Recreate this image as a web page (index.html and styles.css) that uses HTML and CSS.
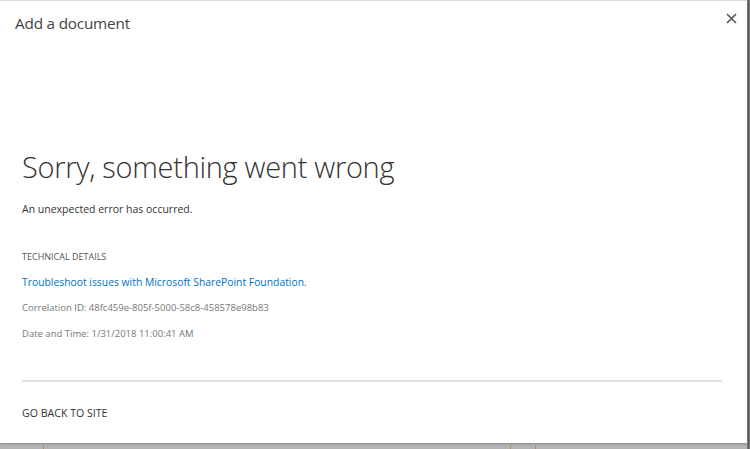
FILE: index.html
```html
<!DOCTYPE html>
<html>
<head>
<meta charset="utf-8">
<link rel="stylesheet" href="styles.css">
</head>
<body>
<div class="backdrop">
  <div class="dialog">
    <div class="titlebar">
      <h1 class="title">Add a document</h1>
      <span class="close">
        <svg width="11" height="11" viewBox="0 0 11 11"><path d="M1 1L10 10M10 1L1 10" stroke="#555" stroke-width="1.6"/></svg>
      </span>
    </div>
    <div class="content">
      <h2 class="headline">Sorry, something went wrong</h2>
      <p class="message">An unexpected error has occurred.</p>
      <p class="label">TECHNICAL DETAILS</p>
      <a class="link" href="#">Troubleshoot issues with Microsoft SharePoint Foundation.</a>
      <p class="detail">Correlation ID: 48fc459e-805f-5000-58c8-458578e98b83</p>
      <p class="detail">Date and Time: 1/31/2018 11:00:41 AM</p>
      <hr class="rule">
      <p class="back">GO BACK TO SITE</p>
    </div>
  </div>
  <div class="under">
    <span class="tick t1"></span>
    <span class="tick t2"></span>
    <span class="tick t3"></span>
  </div>
</div>
</body>
</html>
```
FILE: styles.css
```css
html, body {
  margin: 0;
  padding: 0;
  height: 100%;
  overflow: hidden;
  background: #b3b3b3;
}
.backdrop {
  position: relative;
  width: 750px;
  height: 449px;
  background: linear-gradient(to right, #b3b3b3 0, #b3b3b3 747px, #444 748px, #777 749px);
}
.dialog {
  position: relative;
  width: 747px;
  height: 443px;
  background: #fff;
  border-top: 1px solid #dcdcdc;
  box-sizing: border-box;
  box-shadow: 0 1px 2px rgba(0,0,0,0.25);
  font-family: "Open Sans", "Noto Sans", sans-serif;
}
.titlebar {
  display: flex;
  justify-content: space-between;
  align-items: flex-start;
  height: 48px;
}
.title {
  margin: 12px 0 0 15px;
  font-size: 15.3px;
  font-weight: 400;
  color: #444;
  letter-spacing: -0.2px;
}
.close {
  margin: 12px 10px 0 0;
  display: block;
  line-height: 0;
}
.content {
  padding: 98px 25px 0 22px;
}
.headline {
  margin: 0;
  font-size: 29px;
  font-weight: 300;
  color: #333;
  letter-spacing: -0.3px;
  line-height: 40px;
}
.message {
  margin: 15px 0 0;
  font-size: 10.5px;
  line-height: 14px;
  color: #333;
}
.label {
  margin: 35px 0 0;
  font-size: 9px;
  line-height: 12px;
  color: #555;
}
.link {
  display: block;
  margin-top: 12px;
  font-size: 10.35px;
  line-height: 14px;
  color: #0072c6;
  text-decoration: none;
}
.detail {
  margin: 12px 0 0;
  font-size: 9.5px;
  line-height: 14px;
  color: #777;
}
.rule {
  margin: 39px 0 0;
  border: 0;
  border-top: 2px solid #e1e1e1;
  height: 0;
}
.back {
  margin: 24px 0 0;
  font-size: 10.6px;
  color: #333;
}
.under {
  position: absolute;
  left: 0;
  top: 444px;
  width: 747px;
  height: 5px;
}
.tick {
  position: absolute;
  top: 1px;
  width: 1px;
  height: 4px;
  background: #b98a4a;
}
.t1 { left: 43px; }
.t2 { left: 510px; }
.t3 { left: 535px; }
```
